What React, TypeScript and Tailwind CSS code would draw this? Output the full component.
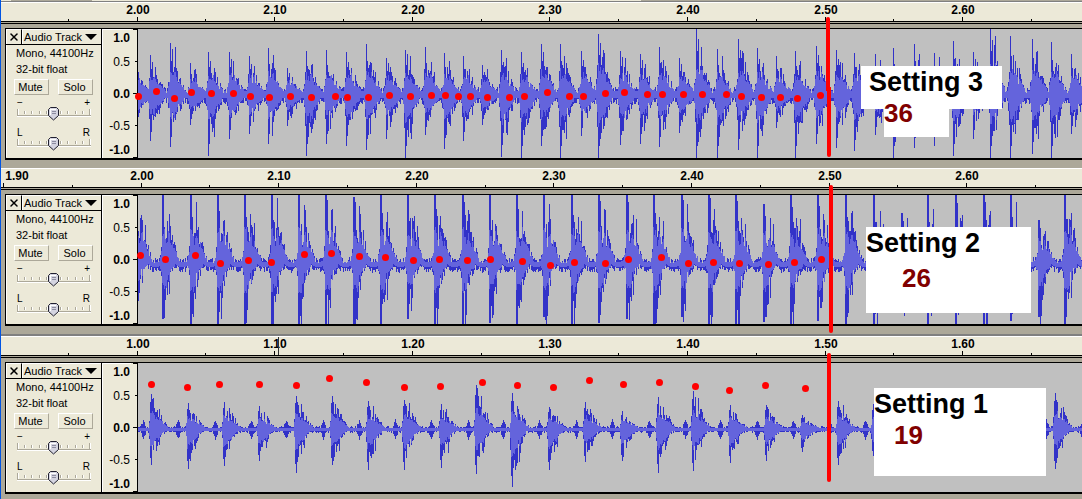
import { X } from 'lucide-react'

type Pulse = [x: number, top: number, bottom: number]
type Point = [x: number, y: number]

interface Profile {
  base: number
  floor: number
  pre: number[]
  up: number[]
  down: number[]
  inner: number
  drift: number
  bump: number
}

interface Track {
  id: string
  firstLabel: number
  firstTick: number
  cursor?: number
  profile: Profile
  pulses: Pulse[]
  dots: Point[]
  marker: string
}

const WAVE_LEFT = 138
const WAVE_HEIGHT = 129
const TICK_STEP = 137.6

const tracks: Track[] = [
  {
    id: 'track-3',
    firstLabel: 1.9,
    firstTick: -1,
    profile: {
      base: 66,
      floor: 6,
      pre: [0.45, 0.22],
      up: [1, 0.66, 0.76, 0.58, 0.66, 0.78, 0.6, 0.5, 0.36, 0.4, 0.32, 0.26, 0.24, 0.18, 0.14],
      down: [1, 0.8, 0.66, 0.62, 0.72, 0.56, 0.64, 0.42, 0.34, 0.38, 0.26, 0.24, 0.18, 0.14],
      inner: 0.5,
      drift: 0,
      bump: 0,
    },
    pulses: [
      [134, 60, 130], [150, 55, 140], [170, 43, 146], [190, 63, 124], [208, 52, 155], [229, 52, 138],
      [249, 56, 133], [268, 48, 143], [287, 68, 125], [306, 51, 155], [326, 50, 143], [346, 52, 145],
      [366, 44, 149], [386, 58, 138], [405, 50, 158], [425, 47, 134], [444, 53, 148], [463, 56, 140],
      [482, 65, 124], [501, 50, 156], [521, 52, 157], [541, 44, 145], [560, 44, 158], [581, 51, 135],
      [598, 34, 158], [620, 51, 144], [640, 54, 143], [659, 47, 146], [679, 58, 132], [696, 29, 158],
      [717, 49, 158], [738, 39, 149], [757, 48, 158], [776, 56, 127], [795, 51, 158], [816, 46, 143],
      [836, 50, 147], [854, 53, 150], [875, 54, 134], [893, 48, 158], [914, 44, 147], [934, 53, 145],
      [953, 41, 155], [973, 52, 138], [990, 29, 158], [1010, 36, 158], [1032, 39, 153], [1051, 42, 158],
      [1071, 54, 133],
    ].map(([x, top, bottom]) => [x, top - 29, bottom - 29]),
    dots: [
      [138, 96], [156, 91], [174, 98], [191, 92], [211, 93], [233, 93], [250, 96], [269, 97], [290, 96],
      [311, 97], [335, 96], [347, 97], [368, 97], [389, 95], [410, 96], [431, 95], [445, 95], [458, 96],
      [470, 96], [487, 97], [509, 97], [524, 96], [547, 92], [569, 96], [583, 96], [605, 93], [624, 92],
      [647, 94], [662, 94], [683, 94], [702, 94], [726, 94], [741, 96], [761, 97], [780, 97], [797, 98],
      [820, 95],
    ].map(([x, y]) => [x, y - 29]),
    marker: 'M827 17V87H828V153',
  },
  {
    id: 'track-2',
    firstLabel: 1.9,
    firstTick: 3,
    profile: {
      base: 66,
      floor: 5,
      pre: [0.22, 0.12],
      up: [1, 1, 0.8, 0.6, 0.42, 0.56, 0.8, 0.66, 0.44, 0.42, 0.54, 0.34, 0.28, 0.24, 0.2, 0.16, 0.12],
      down: [1, 1, 1, 1, 0.86, 0.66, 0.36, 0.54, 0.26, 0.22, 0.2, 0.16, 0.12],
      inner: 0.52,
      drift: 4,
      bump: 0,
    },
    pulses: [
      [135, 195, 300], [162, 195, 318], [190, 195, 324], [217, 195, 323], [244, 195, 324], [271, 195, 324],
      [298, 195, 324], [325, 195, 324], [353, 197, 324], [380, 195, 324], [407, 195, 318], [434, 195, 324],
      [462, 195, 324], [489, 195, 322], [516, 195, 324], [543, 195, 316], [571, 195, 324], [598, 195, 322],
      [626, 195, 318], [653, 195, 324], [681, 195, 316], [708, 195, 324], [735, 195, 324], [763, 204, 321],
      [790, 195, 324], [817, 195, 320], [845, 195, 324], [873, 195, 324], [901, 213, 310], [927, 195, 324],
      [955, 195, 324], [983, 195, 324], [1010, 195, 320], [1038, 220, 316], [1064, 195, 324],
    ].map(([x, top, bottom]) => [x, top - 195, bottom - 195]),
    dots: [
      [140, 255], [165, 259], [195, 255], [220, 263], [248, 260], [271, 262], [304, 254], [331, 253],
      [359, 256], [385, 257], [413, 260], [439, 259], [467, 260], [490, 259], [522, 261], [550, 265],
      [574, 262], [605, 263], [628, 259], [661, 257], [688, 263], [713, 262], [739, 263], [768, 264],
      [794, 262], [821, 259],
    ].map(([x, y]) => [x, y - 195]),
    marker: 'M830 19V163',
  },
  {
    id: 'track-1',
    firstLabel: 0.9,
    firstTick: -1,
    cursor: 278,
    profile: {
      base: 66,
      floor: 2,
      pre: [0.3],
      up: [0.78, 1, 0.8, 0.76, 0.62, 0.58, 0.76, 0.54, 0.46, 0.52, 0.4, 0.34, 0.36, 0.26, 0.22, 0.18, 0.14, 0.1],
      down: [0.8, 1, 0.78, 0.74, 0.66, 0.6, 0.54, 0.44, 0.54, 0.38, 0.26, 0.2, 0.16, 0.12, 0.1],
      inner: 0.52,
      drift: 0,
      bump: 7,
    },
    pulses: [
      [115, 400, 460], [150, 394, 464], [187, 403, 468], [223, 402, 465], [258, 406, 460], [295, 396, 472],
      [331, 396, 464], [367, 401, 469], [403, 400, 469], [440, 404, 467], [475, 385, 473], [511, 393, 486],
      [548, 407, 469], [584, 402, 461], [621, 411, 460], [657, 397, 472], [692, 391, 470], [729, 405, 462],
      [765, 405, 460], [801, 415, 451], [837, 401, 464], [872, 404, 455], [909, 400, 460], [945, 400, 460],
      [981, 400, 460], [1018, 400, 460], [1054, 393, 468],
    ].map(([x, top, bottom]) => [x, top - 363, bottom - 363]),
    dots: [
      [151, 384], [187, 387], [219, 384], [259, 384], [296, 385], [329, 378], [366, 382], [404, 387],
      [440, 386], [482, 382], [517, 385], [553, 387], [589, 380], [623, 384], [659, 382], [695, 386],
      [729, 390], [765, 385], [805, 388],
    ].map(([x, y]) => [x, y - 363]),
    marker: 'M828 19V144',
  },
]

// Repeatable pseudo-random value in 0..1
function noise(n: number) {
  const v = Math.sin(n * 127.1 + 11.7) * 43758.5453
  return v - Math.floor(v)
}

function buildWave(pulses: Pulse[], p: Profile, seed: number) {
  let outer = ''
  let inner = ''
  for (let x = WAVE_LEFT; x < 1082; x++) {
    let i = 0
    while (i < pulses.length - 1 && pulses[i + 1][0] <= x) i++
    const d = x - pulses[i][0]
    const next = pulses[i + 1]
    // The columns just before an attack already swell towards it
    const lead = next ? p.pre[next[0] - x - 1] ?? 0 : 0
    const [, top, bottom] = lead ? next : pulses[i]
    const n1 = noise(x + seed)
    const n2 = noise(x * 3 + seed)
    const n3 = noise(x * 7 + seed)
    const upAmp = p.base - top
    const downAmp = bottom - p.base
    const upShape = lead || (p.up[d] ?? 0)
    const downShape = lead || (p.down[d] ?? 0)
    const jitter = d < 2 ? 1 : 0.5 + n1 * 0.7
    const jitterDown = d < 2 ? 1 : 0.45 + n2 * 0.7

    const centre = p.base + p.drift * Math.sin(Math.max(0, d - 12) / 5)
    const bump = p.bump * Math.max(0, 1 - Math.abs(d - 28) / 3)
    const up = Math.max(upAmp * upShape * jitter, p.floor * (0.3 + n2 * 1.1) + bump)
    const down = Math.max(downAmp * downShape * jitterDown, p.floor * (0.3 + n1 * 1.1) + bump)
    const body = p.inner * (0.75 + n3 * 0.4)
    const innerUp = Math.min(up, body * upAmp * Math.min(upShape, 0.8) + p.floor * 0.6)
    const innerDown = Math.min(down, body * downAmp * Math.min(downShape, 0.8) + p.floor * 0.3)

    const cx = x - WAVE_LEFT + 0.5
    const yTop = Math.max(0, Math.round(centre - up))
    const yBottom = Math.min(WAVE_HEIGHT, Math.round(centre + down) + 1)
    outer += `M${cx} ${yTop}V${yBottom}`
    inner += `M${cx} ${Math.round(centre - innerUp)}V${Math.round(centre + innerDown) + 1}`
  }
  return { outer, inner }
}

function Waveform({ track, seed }: { track: Track; seed: number }) {
  const { outer, inner } = buildWave(track.pulses, track.profile, seed)
  return (
    <div className="min-w-0 flex-1 bg-[#c0c0c0]">
      <svg className="block w-full overflow-visible" height={WAVE_HEIGHT} aria-hidden="true">
        <path d={outer} stroke="#3232c8" shapeRendering="crispEdges" />
        <path d={inner} stroke="#6464dc" shapeRendering="crispEdges" />
        {track.dots.map(([x, y]) => (
          <circle key={x} cx={x - WAVE_LEFT + 0.5} cy={y + 0.5} r="3.5" fill="#ff0000" />
        ))}
      </svg>
    </div>
  )
}

function Ruler({ track }: { track: Track }) {
  const ticks = Array.from({ length: 16 }, (_, i) => i)
  return (
    <div className="border-t border-white bg-[#ece9d8]">
      <svg className="block h-[18px] w-full" aria-label="Timeline">
        {ticks.map((i) => {
          const major = i % 2 === 0
          const x = Math.round(track.firstTick - 1 + (i * TICK_STEP) / 2)
          if (x < 0) return null
          return (
            <g key={i}>
              <rect x={x} y={major ? 14 : 16} width="1" height={major ? 4 : 2} fill="#000" />
              {major && (
                <text x={Math.max(x + 1, 16)} y="11" textAnchor="middle" className="text-xs font-bold">
                  {(track.firstLabel + i * 0.05).toFixed(2)}
                </text>
              )}
            </g>
          )
        })}
        {track.cursor && <rect x={track.cursor - 1} y="0" width="1" height="18" fill="#303030" />}
      </svg>
      <div className="h-[3px] border-y border-black bg-[#aca899]" />
    </div>
  )
}

function Slider({ label, left, right }: { label: string; left: string; right: string }) {
  return (
    <div className="relative mx-[10px] h-[30px]">
      <div className="flex justify-between px-px text-[10px] leading-3" aria-hidden="true">
        <span>{left}</span>
        <span>{right}</span>
      </div>
      <svg className="absolute bottom-0 left-0 h-5 w-full" aria-hidden="true" shapeRendering="crispEdges">
        {Array.from({ length: 11 }, (_, i) => {
          const end = i === 0 || i === 10
          const x = 1 + Math.round(i * 7.2)
          return (
            <g key={i}>
              <rect x={x} y={end ? 2 : 4} width="1" height={end ? 6 : 3} fill="#aca899" />
              <rect x={x + 1} y={end ? 2 : 4} width="1" height={end ? 6 : 3} fill="#fff" />
            </g>
          )
        })}
        <rect x="1" y="8" width="74" height="1" fill="#aca899" />
        <rect x="1" y="9" width="74" height="1" fill="#fff" />
        <path
          d="M34.5 .5H40.5L42.5 2.5V8.5L37.5 13L32.5 8.5V2.5Z"
          fill="#d4d4e0"
          stroke="#202030"
          shapeRendering="auto"
        />
        <path d="M34 8V2.5H40" fill="none" stroke="#fff" />
        <path d="M36 4.5H40M36 6.5H40" stroke="#8c8ca0" />
      </svg>
      <input
        type="range"
        aria-label={label}
        min={-10}
        max={10}
        defaultValue={0}
        className="absolute inset-x-0 bottom-0 h-5 w-full opacity-0"
      />
    </div>
  )
}

function ControlPanel() {
  return (
    <div className="w-24 shrink-0 border-r border-black bg-[#ece9d8] text-[11px]">
      <div className="flex h-4 border-b border-black">
        <button
          type="button"
          aria-label="Close track"
          className="flex w-4 items-center justify-center border-t border-l border-r border-t-white border-l-white border-r-black"
        >
          <X size={12} strokeWidth={3} />
        </button>
        <button
          type="button"
          className="flex flex-1 items-center justify-between border-t border-l border-white pr-1 pl-px leading-3 whitespace-nowrap"
        >
          Audio Track
          <svg width="12" height="6" aria-hidden="true">
            <path d="M0 0H12L6 6Z" />
          </svg>
        </button>
      </div>
      <div className="border-l border-white">
        <div className="pl-[9px] leading-4 whitespace-nowrap">
          <p>Mono, 44100Hz</p>
          <p>32-bit float</p>
        </div>
        <div className="flex gap-[9px] pt-[2px] pl-[7px]">
          {['Mute', 'Solo'].map((name) => (
            <button
              key={name}
              type="button"
              className="h-4 w-[35px] border border-t-white border-r-[#aca899] border-b-[#aca899] border-l-white pr-[2px] leading-3"
            >
              {name}
            </button>
          ))}
        </div>
        <div className="-ml-px pt-[2px]">
          <Slider label="Gain" left="−" right="+" />
          <Slider label="Pan" left="L" right="R" />
        </div>
      </div>
    </div>
  )
}

function AmplitudeScale() {
  return (
    <div className="flex w-9 shrink-0 border-r border-black bg-[#ece9d8] text-xs">
      <div className="flex flex-1 flex-col items-end justify-between border-t border-l border-white pr-px leading-4">
        <span className="font-bold">1.0</span>
        <span>0.5</span>
        <span className="py-2 font-bold">0.0</span>
        <span>-0.5</span>
        <span className="font-bold">-1.0</span>
      </div>
      <svg className="w-[6px]" height={WAVE_HEIGHT} aria-hidden="true">
        <path d="M2 .5H6M4 32.5H6M2 64.5H6M4 96.5H6M2 128.5H6" stroke="#000" />
      </svg>
    </div>
  )
}

function TrackStrip({ track, seed, children }: { track: Track; seed: number; children: React.ReactNode }) {
  return (
    <section className="relative">
      <Ruler track={track} />
      <div className="mt-1 ml-1 flex border-t border-b-2 border-l border-black">
        <ControlPanel />
        <AmplitudeScale />
        <Waveform track={track} seed={seed} />
      </div>
      {/* Playback limit marker */}
      <svg className="pointer-events-none absolute inset-0 h-full w-full overflow-visible" aria-hidden="true">
        <path d={track.marker} fill="none" stroke="#ff0000" strokeWidth="4" strokeLinecap="round" />
      </svg>
      {children}
    </section>
  )
}

export default function App() {
  return (
    <main
      className="min-h-screen overflow-hidden border-l border-[#0054e3] bg-[#aca899] text-black"
      style={{ fontFamily: '"Liberation Sans", Arial, sans-serif' }}
    >
      <div className="flex h-[2px] border-b border-[#808080] bg-[#ece9d8]">
        <div className="ml-[10px] w-[81px] bg-[#aca899]" />
        <div className="ml-[549px] flex-1 bg-[#aca899]" />
      </div>

      <TrackStrip track={tracks[0]} seed={5}>
        <div className="absolute top-16 left-[860px] text-[27px] leading-8 font-bold">
          <div className="h-[43px] w-[141px] bg-white pl-2">Setting 3</div>
          <div className="ml-[23px] h-7 w-[65px] bg-white">
            <p className="relative -top-3 text-[26px] text-[#800000]">36</p>
          </div>
        </div>
      </TrackStrip>

      <div className="h-2" />

      <TrackStrip track={tracks[1]} seed={40}>
        <div className="absolute top-[59px] left-[865px] h-[86px] w-[165px] bg-white text-[27px] leading-8 font-bold">
          <p>Setting 2</p>
          <p className="pt-[3px] pl-9 text-[26px] text-[#800000]">26</p>
        </div>
      </TrackStrip>

      <div className="h-[10px] border-b-2 border-[#808080]" />

      <TrackStrip track={tracks[2]} seed={77}>
        <div className="absolute top-[52px] left-[873px] h-[88px] w-[172px] bg-white text-[27px] leading-8 font-bold">
          <p>Setting 1</p>
          <p className="-mt-px pl-5 text-[26px] text-[#800000]">19</p>
        </div>
      </TrackStrip>
    </main>
  )
}
